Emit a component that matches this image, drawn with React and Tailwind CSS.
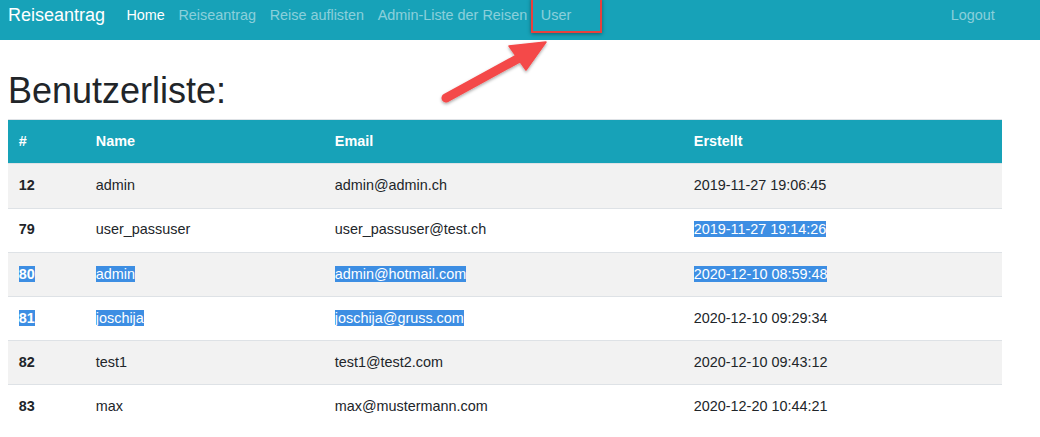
import React from "react";

const rows = [
  { id: "12", name: "admin", email: "admin@admin.ch", date: "2019-11-27 19:06:45", sel: [] },
  { id: "79", name: "user_passuser", email: "user_passuser@test.ch", date: "2019-11-27 19:14:26", sel: ["date"] },
  { id: "80", name: "admin", email: "admin@hotmail.com", date: "2020-12-10 08:59:48", sel: ["id", "name", "email", "date"] },
  { id: "81", name: "joschija", email: "joschija@gruss.com", date: "2020-12-10 09:29:34", sel: ["id", "name", "email"] },
  { id: "82", name: "test1", email: "test1@test2.com", date: "2020-12-10 09:43:12", sel: [] },
  { id: "83", name: "max", email: "max@mustermann.com", date: "2020-12-20 10:44:21", sel: [] },
];

function Cell({ children, sel }) {
  return sel ? <span className="bg-[#3d8ee3] text-white">{children}</span> : children;
}

export default function App() {
  return (
    <div className="relative w-[1040px] h-[437px] overflow-hidden bg-white text-[#212529]" style={{ fontFamily: '"Liberation Sans", Arial, sans-serif' }}>
      <nav className="flex h-[40px] items-start bg-[#17a2b8] pl-[8px] pr-[38px]">
        <span className="mt-[2px] mr-[14.6px] text-[18px] leading-[27px] text-white">Reiseantrag</span>
        <div className="flex mt-[5px] text-[14.4px] leading-[21.6px]">
          <span className="px-[6.8px] text-white">Home</span>
          <span className="px-[6.8px] text-white/50">Reiseantrag</span>
          <span className="px-[6.8px] text-white/50">Reise auflisten</span>
          <span className="px-[6.8px] text-white/50">Admin-Liste der Reisen</span>
          <span className="px-[6.8px] text-white/50">User</span>
        </div>
        <span className="ml-auto mt-[5px] px-[7.2px] text-[14.4px] leading-[21.6px] text-white/50">Logout</span>
      </nav>

      <main className="pt-[29px] pl-[8px]">
        <h1 className="mb-[7px] text-[36px] leading-[43.2px] font-normal">Benutzerliste:</h1>
        <table className="w-[994px] table-fixed border-collapse text-[14.4px] leading-[21.6px]">
          <colgroup>
            <col className="w-[77px]" />
            <col className="w-[239px]" />
            <col className="w-[359px]" />
            <col className="w-[319px]" />
          </colgroup>
          <thead>
            <tr className="bg-[#17a2b8] text-white">
              <th className="border-t border-[#dee2e6] p-[10.8px] text-left font-bold">#</th>
              <th className="border-t border-[#dee2e6] p-[10.8px] text-left font-bold">Name</th>
              <th className="border-t border-[#dee2e6] p-[10.8px] text-left font-bold">Email</th>
              <th className="border-t border-[#dee2e6] p-[10.8px] text-left font-bold">Erstellt</th>
            </tr>
          </thead>
          <tbody>
            {rows.map((r, i) => (
              <tr key={r.id} className={i % 2 === 0 ? "bg-[#f2f2f2]" : "bg-white"}>
                <td className="border-t border-[#dee2e6] p-[10.8px] font-bold"><Cell sel={r.sel.includes("id")}>{r.id}</Cell></td>
                <td className="border-t border-[#dee2e6] p-[10.8px]"><Cell sel={r.sel.includes("name")}>{r.name}</Cell></td>
                <td className="border-t border-[#dee2e6] p-[10.8px]"><Cell sel={r.sel.includes("email")}>{r.email}</Cell></td>
                <td className="border-t border-[#dee2e6] p-[10.8px]"><Cell sel={r.sel.includes("date")}>{r.date}</Cell></td>
              </tr>
            ))}
          </tbody>
        </table>
      </main>

      <div className="pointer-events-none absolute left-[531px] top-[-2px] h-[35px] w-[71px] border-2 border-[#e8403d] shadow-[0_1px_4px_rgba(0,0,0,0.4)]" />
      <svg className="pointer-events-none absolute left-0 top-0" width="1040" height="120" viewBox="0 0 1040 120">
        <defs>
          <filter id="sh" x="-20%" y="-20%" width="140%" height="140%">
            <feDropShadow dx="0" dy="1.5" stdDeviation="1.5" floodColor="#000" floodOpacity="0.35" />
          </filter>
        </defs>
        <g filter="url(#sh)" fill="#f44848" stroke="#f44848">
          <line x1="446" y1="98" x2="521" y2="57" strokeWidth="9" strokeLinecap="round" />
          <polygon points="546,42 509,46 526,70" strokeWidth="1.5" strokeLinejoin="round" />
        </g>
      </svg>
    </div>
  );
}
